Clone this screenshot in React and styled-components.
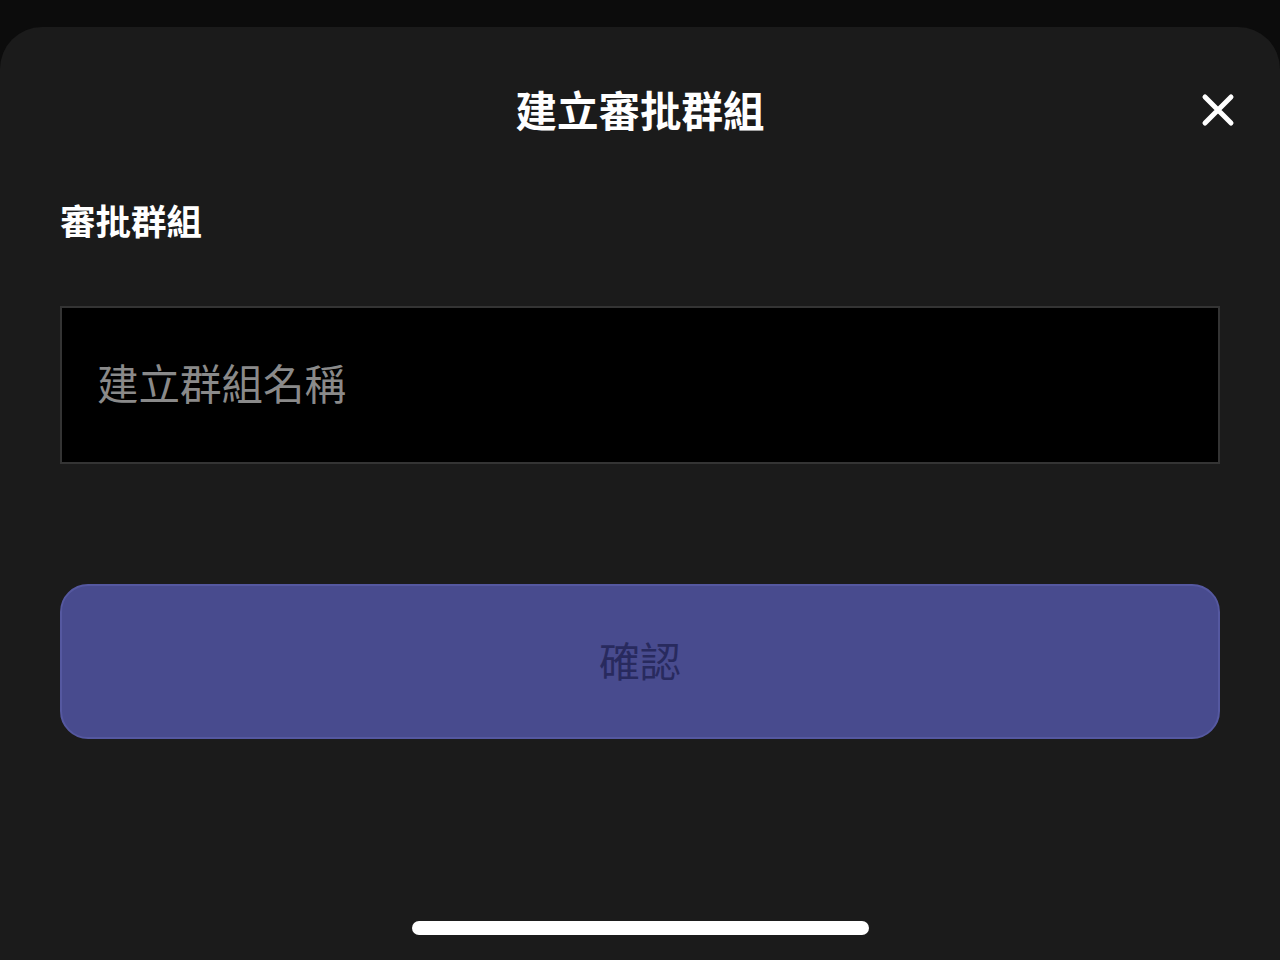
import React from "react";
import styled, { createGlobalStyle } from "styled-components";

const GlobalStyle = createGlobalStyle`
  html, body {
    margin: 0;
    padding: 0;
    background: #0c0c0c;
  }
  body {
    font-family: "Noto Sans CJK TC", "Noto Sans", sans-serif;
  }
`;

const Screen = styled.div`
  width: 1280px;
  height: 960px;
  background: #0c0c0c;
  padding-top: 27px;
  box-sizing: border-box;
  overflow: hidden;
`;

const Sheet = styled.div`
  height: 933px;
  background: #1b1b1b;
  border-radius: 42px 42px 0 0;
  padding: 0 60px;
  box-sizing: border-box;
  display: flex;
  flex-direction: column;
`;

const Header = styled.div`
  position: relative;
  height: 166px;
  display: flex;
  align-items: center;
  justify-content: center;
`;

const Title = styled.h1`
  margin: 0;
  font-size: 41.5px;
  font-weight: 700;
  color: #ffffff;
  line-height: 1;
`;

const CloseButton = styled.button`
  position: absolute;
  right: -17px;
  top: 64px;
  width: 38px;
  height: 38px;
  padding: 0;
  border: none;
  background: transparent;
  display: flex;
  align-items: center;
  justify-content: center;
  cursor: pointer;
`;

const Label = styled.div`
  font-size: 35.5px;
  font-weight: 700;
  color: #ffffff;
  line-height: 1;
  margin-top: 9px;
`;

const Input = styled.input`
  margin-top: 68px;
  height: 158px;
  box-sizing: border-box;
  background: #000000;
  border: 2px solid #343434;
  padding: 0 35px 5px;
  font-family: inherit;
  font-size: 41.5px;
  color: #ffffff;
  outline: none;

  &::placeholder {
    color: #8a8a8a;
  }
`;

const Confirm = styled.button`
  margin-top: 120px;
  height: 155px;
  border-radius: 28px;
  background: #484b8e;
  border: 2px solid #5558a0;
  padding: 0 0 5px;
  font-family: inherit;
  font-size: 41px;
  color: #282a5e;
  cursor: pointer;
`;

const HomeBar = styled.div`
  margin: auto auto 25px;
  width: 457px;
  height: 14px;
  border-radius: 7px;
  background: #ffffff;
`;

export default function App() {
  return (
    <>
      <GlobalStyle />
      <Screen>
        <Sheet>
          <Header>
            <Title>建立審批群組</Title>
            <CloseButton aria-label="關閉">
              <svg width="34" height="34" viewBox="0 0 34 34">
                <path
                  d="M4 4 L30 30 M30 4 L4 30"
                  stroke="#ffffff"
                  strokeWidth="5"
                  strokeLinecap="round"
                />
              </svg>
            </CloseButton>
          </Header>
          <Label>審批群組</Label>
          <Input placeholder="建立群組名稱" />
          <Confirm>確認</Confirm>
          <HomeBar />
        </Sheet>
      </Screen>
    </>
  );
}
